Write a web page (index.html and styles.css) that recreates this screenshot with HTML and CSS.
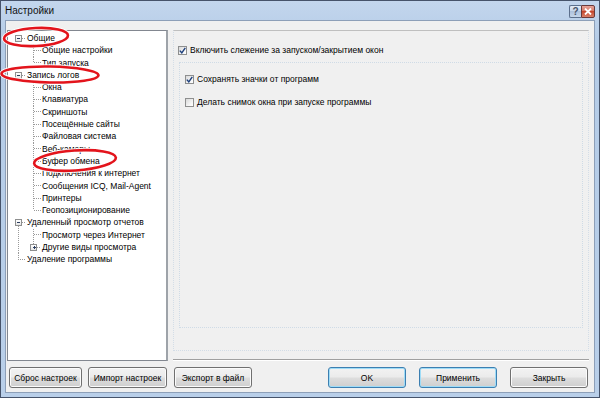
FILE: index.html
```html
<!DOCTYPE html>
<html lang="ru">
<head>
    <meta charset="UTF-8">
    <title>Настройки</title>
    <link rel="stylesheet" href="styles.css">
</head>
<body>

    <div class="window">
        <div class="titlebar">
            <span class="title">Настройки</span>
            <div class="caption-buttons">
                <span class="cap-btn help">?</span>
                <span class="cap-btn close">
                    <svg width="8" height="7" viewBox="0 0 8 7"><path d="M1 0.5 L7 6.5 M7 0.5 L1 6.5" stroke="#fff" stroke-width="1.8"/></svg>
                </span>
            </div>
        </div>

        <div class="client">
            <div class="main">
                <ul class="tree">
                    <li class="root">
                        <div class="row"><span class="exp minus"></span><span class="dash"></span><span class="label">Общие</span></div>
                        <ul class="children">
                            <li><div class="row">Общие настройки</div></li>
                            <li class="last"><div class="row">Тип запуска</div></li>
                        </ul>
                    </li>
                    <li class="root">
                        <div class="row"><span class="exp minus"></span><span class="dash"></span><span class="label">Запись логов</span></div>
                        <ul class="children">
                            <li><div class="row">Окна</div></li>
                            <li><div class="row">Клавиатура</div></li>
                            <li><div class="row">Скриншоты</div></li>
                            <li><div class="row">Посещённые сайты</div></li>
                            <li><div class="row">Файловая система</div></li>
                            <li><div class="row">Веб-камеры</div></li>
                            <li><div class="row">Буфер обмена</div></li>
                            <li><div class="row">Подключения к интернет</div></li>
                            <li><div class="row">Сообщения ICQ, Mail-Agent</div></li>
                            <li><div class="row">Принтеры</div></li>
                            <li class="last"><div class="row">Геопозиционирование</div></li>
                        </ul>
                    </li>
                    <li class="root trunk">
                        <div class="row"><span class="exp minus"></span><span class="dash"></span><span class="label">Удаленный просмотр отчетов</span></div>
                        <ul class="children">
                            <li><div class="row">Просмотр через Интернет</div></li>
                            <li class="last folded"><div class="row"><span class="exp plus"></span><span class="dash"></span><span class="label">Другие виды просмотра</span></div></li>
                        </ul>
                    </li>
                    <li class="root leaf">
                        <div class="row"><span class="dash long"></span><span class="label">Удаление программы</span></div>
                    </li>
                </ul>

                <div class="right">
                    <div class="panel">
                        <div class="check"><span class="box"><svg width="7" height="7" viewBox="0 0 7 7"><path d="M0.8 3.6 L2.8 5.8 L6.3 0.8" fill="none" stroke="#1d3f7c" stroke-width="1.4"/></svg></span>Включить слежение за запуском/закрытием окон</div>
                        <div class="group">
                            <div class="check"><span class="box"><svg width="7" height="7" viewBox="0 0 7 7"><path d="M0.8 3.6 L2.8 5.8 L6.3 0.8" fill="none" stroke="#1d3f7c" stroke-width="1.4"/></svg></span>Сохранять значки от программ</div>
                            <div class="check"><span class="box"></span>Делать снимок окна при запуске программы</div>
                        </div>
                    </div>
                    <div class="separator"></div>
                </div>
            </div>

            <div class="buttons">
                <button class="btn reset">Сброс настроек</button>
                <button class="btn import">Импорт настроек</button>
                <button class="btn export">Экспорт в файл</button>
                <button class="btn ok default">OK</button>
                <button class="btn apply default">Применить</button>
                <button class="btn close-btn">Закрыть</button>
            </div>
        </div>
    </div>

    <!-- red marker ovals drawn over the screenshot -->
    <svg class="marks" width="600" height="398" viewBox="0 0 600 398">
        <g fill="none" stroke="#fff" stroke-width="4.5" opacity="0.9">
            <ellipse cx="36" cy="37" rx="32" ry="9" transform="rotate(-3 36 37)"/>
            <ellipse cx="50" cy="74.5" rx="48.5" ry="8" transform="rotate(1 50 74.5)"/>
            <ellipse cx="75" cy="160.5" rx="41" ry="10" transform="rotate(-4 75 160.5)"/>
        </g>
        <g fill="none" stroke="#e3141c" stroke-width="2.6">
            <ellipse cx="36" cy="37" rx="32" ry="9" transform="rotate(-3 36 37)"/>
            <ellipse cx="50" cy="74.5" rx="48.5" ry="8" transform="rotate(1 50 74.5)"/>
            <ellipse cx="75" cy="160.5" rx="41" ry="10" transform="rotate(-4 75 160.5)"/>
        </g>
    </svg>

</body>
</html>
```

FILE: styles.css
```css
html, body {
    margin: 0;
    padding: 0;
}
body {
    width: 600px;
    height: 398px;
    overflow: hidden;
    position: relative;
    font-family: "Liberation Sans", Arial, sans-serif;
    font-size: 8.5px;
    color: #000;
}
.window {
    box-sizing: border-box;
    width: 600px;
    height: 398px;
    border: 1px solid #46536a;
    background: linear-gradient(#c3d6ed, #b5cce7 40px, #b9cfe9);
    padding: 0 4px 4px 4px;
    display: flex;
    flex-direction: column;
}
.titlebar {
    height: 19px;
    display: flex;
    align-items: center;
    justify-content: space-between;
}
.title {
    font-size: 10px;
    color: #111;
}
.caption-buttons {
    display: flex;
    align-self: flex-start;
    margin-top: 4px;
}
.cap-btn {
    box-sizing: border-box;
    height: 13px;
    display: flex;
    align-items: center;
    justify-content: center;
    border: 1px solid #5c6f8c;
}
.help {
    width: 12px;
    background: linear-gradient(#e4ecf6, #c3d3e8 50%, #aec2dd 50%, #c6d6ea);
    color: #48556a;
    font-size: 10px;
    font-weight: bold;
    border-right: none;
    border-radius: 2px 0 0 2px;
}
.close {
    width: 14px;
    background: linear-gradient(#e8a49a, #d3735f 50%, #c4472e 50%, #d9826c);
    border-color: #6a3a3a;
    border-radius: 0 2px 2px 0;
}

/* client area */
.client {
    flex: 1;
    border: 1px solid #8d9fb8;
    background: #f0f0f0;
    padding: 9px 5px 0 1px;
    display: flex;
    flex-direction: column;
}
.main {
    display: flex;
    gap: 5px;
    height: 331px;
}

/* tree */
.tree {
    box-sizing: border-box;
    width: 161px;
    margin: 0;
    padding: 1px 0 0 0;
    list-style: none;
    background: #fff;
    border: 1px solid #828790;
    border-right-width: 2px;
    border-right-color: #9ea3a9;
}
.tree ul {
    list-style: none;
    margin: 0;
    padding: 0;
}
.row {
    height: 12.3px;
    line-height: 12.3px;
    display: flex;
    align-items: center;
    white-space: nowrap;
}
.root > .row {
    padding-left: 7px;
}
.exp {
    box-sizing: border-box;
    width: 7px;
    height: 7px;
    border: 1px solid #8e8f8f;
    background: linear-gradient(#fff, #e6e6e6);
    flex: none;
    display: flex;
    align-items: center;
    justify-content: center;
    position: relative;
}
.exp::before {
    content: "";
    width: 3px;
    height: 1px;
    background: #2c3e60;
}
.exp.plus::after {
    content: "";
    width: 1px;
    height: 3px;
    background: #2c3e60;
    margin-left: -2px;
}
.dash {
    width: 4px;
    height: 1px;
    flex: none;
    background: repeating-linear-gradient(to right, #9a9a9a 0 1px, transparent 1px 2px);
}
.dash.long {
    width: 8px;
}
.label {
    margin-left: 1px;
}
.children {
    margin-left: 25px !important;
}
.children > li {
    padding-left: 9px;
    background:
        repeating-linear-gradient(to bottom, #9a9a9a 0 1px, transparent 1px 2px) 0 0 / 1px 100% no-repeat,
        repeating-linear-gradient(to right, #9a9a9a 0 1px, transparent 1px 2px) 1px 50% / 7px 1px no-repeat;
}
.children > li.last {
    background:
        repeating-linear-gradient(to bottom, #9a9a9a 0 1px, transparent 1px 2px) 0 0 / 1px 50% no-repeat,
        repeating-linear-gradient(to right, #9a9a9a 0 1px, transparent 1px 2px) 1px 50% / 7px 1px no-repeat;
}
.children > li.folded {
    padding-left: 0;
    background: repeating-linear-gradient(to bottom, #9a9a9a 0 1px, transparent 1px 2px) 0 0 / 1px 50% no-repeat;
}
.folded .row {
    margin-left: -3px;
}
.trunk {
    background: repeating-linear-gradient(to bottom, #9a9a9a 0 1px, transparent 1px 2px) 10px 10px / 1px 100% no-repeat;
}
.leaf {
    background: repeating-linear-gradient(to bottom, #9a9a9a 0 1px, transparent 1px 2px) 10px 0 / 1px 50% no-repeat;
}
.leaf > .row {
    padding-left: 10px;
}
.leaf .label {
    margin-left: 1px;
}

/* right side */
.right {
    width: 416px;
    display: flex;
    flex-direction: column;
}
.panel {
    box-sizing: border-box;
    height: 321px;
    border: 1px dotted #d3dde7;
    border-top: 1px solid #bfbfbf;
    padding: 15px 4px 0 4px;
}
.check {
    display: flex;
    align-items: center;
    height: 9px;
    line-height: 9px;
    white-space: nowrap;
}
.box {
    box-sizing: border-box;
    width: 9px;
    height: 9px;
    margin-right: 3px;
    border: 1px solid #8e8f8f;
    background: linear-gradient(135deg, #d9d9d9, #f7f7f7 70%, #fff);
    display: flex;
    align-items: center;
    justify-content: center;
    flex: none;
}
.group {
    box-sizing: border-box;
    height: 266px;
    margin: 7px 1px 0 1px;
    border: 1px dotted #cfdbe6;
    padding: 12px 5px 0 5px;
}
.group .check + .check {
    margin-top: 14px;
}
.separator {
    margin-top: 8px;
    height: 1px;
    background: #a0a0a0;
    border-bottom: 1px solid #fff;
}

/* bottom buttons */
.buttons {
    display: flex;
    margin-top: 6px;
    padding-left: 2px;
}
.btn {
    box-sizing: border-box;
    height: 21px;
    width: 78px;
    padding: 0;
    font-family: "Liberation Sans", Arial, sans-serif;
    font-size: 8.5px;
    color: #000;
    border: 1px solid #707070;
    border-radius: 3px;
    background: linear-gradient(#f2f2f2, #ebebeb 48%, #dddddd 52%, #cfcfcf);
    box-shadow: inset 0 0 0 1px #fbfbfb;
}
.btn.default {
    border-color: #3c7fb1;
    box-shadow: inset 0 0 0 1px #9fdcf7;
}
.reset {
    width: 73px;
}
.import {
    width: 79px;
    margin-left: 6px;
}
.export {
    margin-left: 7px;
}
.ok {
    margin-left: auto;
}
.apply {
    margin-left: 13px;
}
.close-btn {
    margin-left: 13px;
    margin-right: 1px;
}

.marks {
    position: absolute;
    left: 0;
    top: 0;
    pointer-events: none;
}
```
